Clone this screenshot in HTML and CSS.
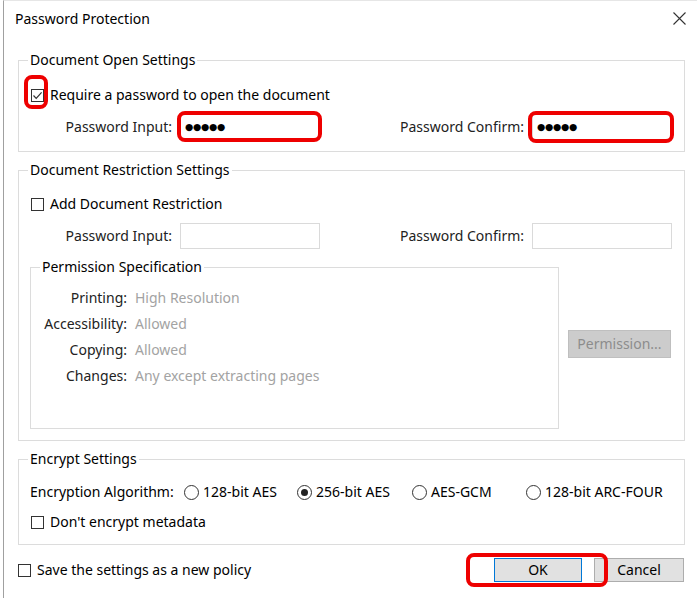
FILE: index.html
```html
<!DOCTYPE html>
<html lang="en">

<head>
    <meta charset="UTF-8">
    <title>Password Protection</title>
    <link rel="stylesheet" href="styles.css">
</head>

<body>
    <div class="window">
        <div class="title-bar">
            <span class="title">Password Protection</span>
            <svg class="close" width="13" height="13" viewBox="0 0 13 13">
                <path d="M0.5 0.5 L12.5 12.5 M12.5 0.5 L0.5 12.5" stroke="#333" stroke-width="1.1" fill="none" />
            </svg>
        </div>

        <fieldset class="group">
            <legend>Document Open Settings</legend>
            <div class="check-row first">
                <span class="check mark mark-check">
                    <svg width="11" height="11" viewBox="0 0 11 11">
                        <path d="M1.5 5.5 L4.2 8.3 L9.6 2.4" stroke="#333" stroke-width="1.2" fill="none" />
                    </svg>
                </span>
                <span>Require a password to open the document</span>
            </div>
            <div class="pass-row">
                <span class="field-label">Password Input:</span>
                <span class="field mark mark-input"><span class="dots">●●●●●</span></span>
                <span class="field-label wide">Password Confirm:</span>
                <span class="field mark mark-confirm"><span class="dots">●●●●●</span></span>
            </div>
        </fieldset>

        <fieldset class="group spaced">
            <legend>Document Restriction Settings</legend>
            <div class="check-row restrict">
                <span class="check"></span>
                <span>Add Document Restriction</span>
            </div>
            <div class="pass-row">
                <span class="field-label">Password Input:</span>
                <span class="field"></span>
                <span class="field-label wide">Password Confirm:</span>
                <span class="field"></span>
            </div>
            <div class="perm-row">
                <fieldset class="group inner">
                    <legend>Permission Specification</legend>
                    <div class="perm-list">
                        <span class="perm-label">Printing:</span>
                        <span class="perm-value">High Resolution</span>
                        <span class="perm-label">Accessibility:</span>
                        <span class="perm-value">Allowed</span>
                        <span class="perm-label">Copying:</span>
                        <span class="perm-value">Allowed</span>
                        <span class="perm-label">Changes:</span>
                        <span class="perm-value">Any except extracting pages</span>
                    </div>
                </fieldset>
                <button class="perm-button" disabled>Permission...</button>
            </div>
        </fieldset>

        <fieldset class="group spaced encrypt">
            <legend>Encrypt Settings</legend>
            <div class="algo-row">
                <span>Encryption Algorithm:</span>
                <span class="radio-item"><span class="radio"></span>128-bit AES</span>
                <span class="radio-item"><span class="radio on"></span>256-bit AES</span>
                <span class="radio-item"><span class="radio"></span>AES-GCM</span>
                <span class="radio-item"><span class="radio"></span>128-bit ARC-FOUR</span>
            </div>
            <div class="check-row metadata">
                <span class="check"></span>
                <span>Don't encrypt metadata</span>
            </div>
        </fieldset>

        <div class="footer">
            <div class="check-row policy">
                <span class="check"></span>
                <span>Save the settings as a new policy</span>
            </div>
            <div class="buttons">
                <button class="btn ok mark mark-ok">OK</button>
                <button class="btn cancel">Cancel</button>
            </div>
        </div>
    </div>
</body>

</html>
```

FILE: styles.css
```css
body {
    margin: 0;
    width: 697px;
    height: 598px;
    overflow: hidden;
    background: #fff;
    color: #000;
    font-family: "Noto Sans", Arial, sans-serif;
    font-size: 14px;
    line-height: 20px;
}

.window {
    margin-left: 3px;
    height: 597px;
    border-left: 1px solid #a0a0a0;
    border-top: 1px solid #e6e6e6;
}

.title-bar {
    height: 49px;
    display: flex;
    justify-content: space-between;
    padding: 8px 11px 0 11px;
    box-sizing: border-box;
}

.title {
    line-height: 20px;
}

.close {
    margin-top: 3px;
}

/* group boxes */
.group {
    margin: 0 12px 0 14px;
    padding: 0 9px 11px 12px;
    border: 1px solid #dcdcdc;
    min-width: 0;
}

.group legend {
    margin-left: -3px;
    padding: 0 2px;
    line-height: 20px;
}

.group.spaced {
    margin-top: 8px;
}

.check-row {
    display: flex;
    align-items: center;
    height: 26px;
}

.check-row.first {
    margin-top: 12px;
}

.check-row.restrict {
    margin-top: 11px;
}

.check {
    width: 13px;
    height: 13px;
    border: 1px solid #333;
    box-sizing: border-box;
    margin-right: 6px;
    display: flex;
    align-items: center;
    justify-content: center;
    flex: none;
}

.pass-row {
    display: flex;
    align-items: center;
    margin-top: 6px;
    height: 26px;
}

.field-label {
    width: 141px;
    text-align: right;
    margin-right: 8px;
    color: #222;
}

.field-label.wide {
    width: 204px;
}

.field {
    width: 140px;
    height: 26px;
    box-sizing: border-box;
    border: 1px solid #dadada;
    background: #fff;
    display: flex;
    align-items: center;
    padding-left: 4px;
}

.dots {
    font-family: "DejaVu Sans", sans-serif;
    font-size: 9.5px;
    letter-spacing: -0.3px;
    color: #000;
}

/* permissions */
.perm-row {
    display: flex;
    align-items: flex-start;
    margin-top: 8px;
}

.group.inner {
    margin: 0 0 0 -1px;
    width: 529px;
    box-sizing: border-box;
    padding: 0 9px 39px 12px;
}

.perm-list {
    display: grid;
    grid-template-columns: 84px auto;
    column-gap: 8px;
    grid-auto-rows: 26px;
    align-items: center;
    margin-top: 8px;
}

.perm-label {
    text-align: right;
    color: #222;
}

.perm-value {
    color: #a3a3a3;
}

.perm-button {
    margin: 73px 0 0 9px;
    width: 103px;
    height: 28px;
    font: inherit;
    background: #cccccc;
    border: 1px solid #bfbfbf;
    color: #8c8c8c;
    padding: 0;
}

/* encryption */
.group.encrypt {
    padding-bottom: 9px;
}

.algo-row {
    display: grid;
    grid-template-columns: 154px 113px 115px 114px auto;
    align-items: center;
    height: 26px;
    margin-top: 10px;
    margin-left: -1px;
}

.radio-item {
    display: flex;
    align-items: center;
}

.radio {
    width: 15px;
    height: 15px;
    border: 1px solid #333;
    border-radius: 50%;
    box-sizing: border-box;
    margin-right: 4px;
    display: flex;
    align-items: center;
    justify-content: center;
    flex: none;
}

.radio.on::after {
    content: "";
    width: 7px;
    height: 7px;
    border-radius: 50%;
    background: #222;
}

.check-row.metadata {
    margin-top: 4px;
}

/* footer */
.footer {
    display: flex;
    justify-content: space-between;
    align-items: center;
    padding: 12px 13px 0 14px;
}

.buttons {
    display: flex;
    gap: 12px;
}

.btn {
    height: 24px;
    font: inherit;
    background: #e1e1e1;
    border: 1px solid #adadad;
    padding: 0;
    color: #000;
}

.btn.ok {
    width: 88px;
    border-color: #0078d7;
}

.btn.cancel {
    width: 90px;
}

/* red annotation rings */
.mark {
    position: relative;
}

.mark::after {
    content: "";
    position: absolute;
    border: 4px solid #ee0000;
    border-radius: 8px;
    pointer-events: none;
}

.mark-check::after {
    top: -15px;
    left: -8px;
    right: -5px;
    bottom: -8px;
}

.mark-input::after {
    top: -4px;
    left: -4px;
    right: -3px;
    bottom: -3px;
}

.mark-confirm::after {
    top: -4px;
    left: -5px;
    right: -3px;
    bottom: -4px;
}

.mark-ok::after {
    top: -6px;
    left: -29px;
    right: -27px;
    bottom: -6px;
}
```
